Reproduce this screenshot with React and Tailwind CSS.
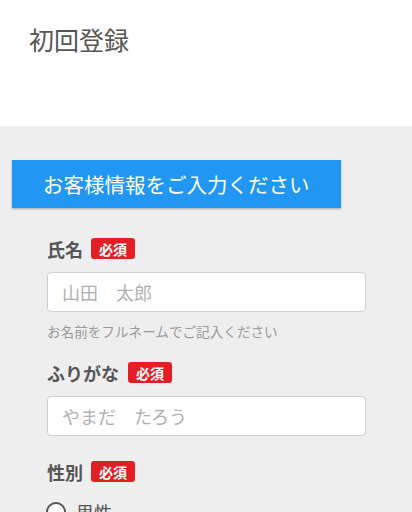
import React from "react";

const font = { fontFamily: '"Noto Sans CJK JP", "Noto Sans", sans-serif' };

const Required = () => (
  <span className="inline-flex h-[21px] items-center rounded-[3px] bg-[#e31f26] px-2 text-[14px] font-bold leading-none text-white">
    必須
  </span>
);

const Label = ({ children, gap = "gap-2" }) => (
  <div className={`flex h-[21px] items-center ${gap}`}>
    <span className="text-[18px] font-bold leading-none text-[#555]">{children}</span>
    <Required />
  </div>
);

const TextInput = ({ placeholder }) => (
  <input
    type="text"
    placeholder={placeholder}
    className="h-[40px] w-[319px] rounded-[4px] border border-[#cfcfcf] bg-white pl-[14px] text-[18px] text-[#333] outline-none placeholder:text-[#b0b0b0]"
  />
);

export default function App() {
  return (
    <div className="min-h-[512px] bg-[#eeeeee]" style={font}>
      <header className="h-[126px] bg-white pl-[29px] pt-[23px]">
        <h1 className="text-[25px] leading-[32px] font-normal text-[#555]">初回登録</h1>
      </header>

      <main className="pt-[34px]">
        <div className="ml-[12px] flex h-[48px] w-[329px] items-center bg-[#2196f3] pl-[31px] text-[20.5px] text-white shadow-[0_1px_2px_rgba(0,0,0,0.3)]">
          お客様情報をご入力ください
        </div>

        <section className="pl-[47px] pt-[30px]">
          <Label>氏名</Label>
          <div className="mt-[13px]">
            <TextInput placeholder="山田　太郎" />
          </div>
          <p className="mt-[9px] text-[13.6px] leading-[20px] text-[#9a9a9a]">
            お名前をフルネームでご記入ください
          </p>

          <div className="mt-[21px]">
            <Label gap="gap-[9px]">ふりがな</Label>
          </div>
          <div className="mt-[13px]">
            <TextInput placeholder="やまだ　たろう" />
          </div>

          <div className="mt-[25px]">
            <Label>性別</Label>
          </div>
          <label className="-ml-px mt-[20px] flex items-center gap-[10px]">
            <span className="h-[20px] w-[20px] rounded-full border-2 border-[#555] bg-white" />
            <span className="text-[18px] leading-[20px] text-[#555]">男性</span>
          </label>
        </section>
      </main>
    </div>
  );
}
